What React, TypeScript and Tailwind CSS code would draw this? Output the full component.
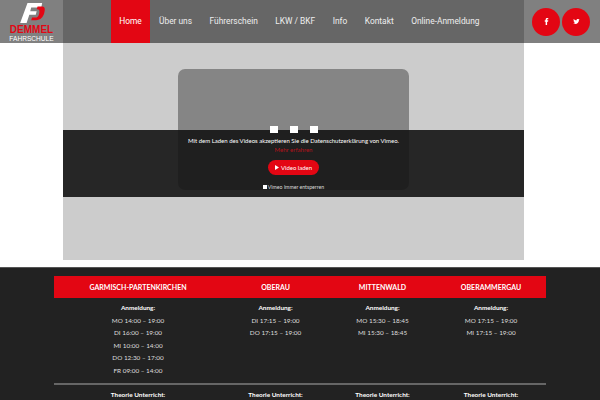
import React from 'react';

const nav = ['Über uns', 'Führerschein', 'LKW / BKF', 'Info', 'Kontakt', 'Online-Anmeldung'];

const locations = [
  { name: 'GARMISCH-PARTENKIRCHEN', times: ['MO 14:00 – 19:00', 'DI 16:00 – 19:00', 'MI 10:00 – 14:00', 'DO 12:30 – 17:00', 'FR 09:00 – 14:00'] },
  { name: 'OBERAU', times: ['DI 17:15 – 19:00', 'DO 17:15 – 19:00'] },
  { name: 'MITTENWALD', times: ['MO 15:30 – 18:45', 'MI 15:30 – 18:45'] },
  { name: 'OBERAMMERGAU', times: ['MO 17:15 – 19:00', 'MI 17:15 – 19:00'] },
];

function Logo() {
  return (
    <div className="flex h-[43px] w-[63px] shrink-0 flex-col items-center bg-[#808080]">
      <svg width="26" height="22" viewBox="0 0 28 24" className="mt-[2px] ml-[2px]">
        <path d="M8 1 H24 L23 6 H12 L11 10 H18 L17 14 H10 L7 23 H0 Z" fill="#fff" />
        <path d="M19 5 H24 C28 5 27 10 26 13 C24 18 21 20 15 20 H12 L13 17 H17 C20 17 21 13 21 10 C21 8 19 8 18 8 Z" fill="#e30613" />
      </svg>
      <div className="mt-[1px] font-['Liberation_Sans',sans-serif] text-[10px] leading-[10px] font-bold text-[#e30613]">DEMMEL</div>
      <div className="font-['Liberation_Sans',sans-serif] text-[6.6px] leading-[7px] text-white">FAHRSCHULE</div>
    </div>
  );
}

function Header() {
  return (
    <header className="absolute inset-x-0 top-0 flex h-[43px] font-['Roboto',sans-serif] text-[8.4px] text-[#eeeeee]">
      <Logo />
      <nav className="flex flex-1 items-stretch bg-[#666666] pl-[48px]">
        <a className="flex w-[39px] items-center justify-center bg-[#e30613] text-white">Home</a>
        <ul className="ml-[9px] flex items-center gap-[17.5px]">
          {nav.map((item) => (
            <li key={item} className="whitespace-nowrap">{item}</li>
          ))}
        </ul>
      </nav>
      <div className="flex w-[76px] shrink-0 items-center gap-[2px] bg-[#808080] pl-[8px]">
        <span className="flex h-[28px] w-[28px] items-center justify-center rounded-full bg-[#e30613]">
          <svg width="7" height="7" viewBox="0 0 24 24" fill="#fff"><path d="M14 8V6c0-1 .5-1.500 1.500-1.500H18V0h-4c-3.500 0-5 2.500-5 5v3H6v4.500h3V24h5V12.500h3.500L18 8z" /></svg>
        </span>
        <span className="flex h-[28px] w-[28px] items-center justify-center rounded-full bg-[#e30613]">
          <svg width="7" height="7" viewBox="0 0 24 24" fill="#fff"><path d="M23 5c-.8.400-1.700.600-2.600.700 1-.600 1.700-1.400 2-2.500-.9.500-1.900.900-2.900 1.100C18.700 3.500 17.500 3 16.200 3c-2.500 0-4.500 2-4.500 4.500 0 .4 0 .7.100 1C8 8.300 4.700 6.500 2.500 3.800c-.4.700-.6 1.400-.6 2.300 0 1.600.8 2.900 2 3.700-.7 0-1.400-.2-2-.6v.1c0 2.200 1.600 4 3.600 4.400-.7.200-1.400.2-2 .1.600 1.800 2.200 3.100 4.200 3.100C6.100 18.100 3.400 19 .5 18.700c2 1.300 4.400 2 7 2 8.300 0 12.900-6.900 12.900-12.900v-.6c.9-.6 1.600-1.400 2.600-2.200z" /></svg>
        </span>
      </div>
    </header>
  );
}

function VideoConsent() {
  return (
    <div className="relative ml-[63px] mr-[76px] h-[260px] bg-[#cccccc]">
      <div className="absolute left-[115px] top-[69px] h-[121px] w-[231px] rounded-[7px] bg-black/35" />
      <div className="absolute inset-x-0 top-[130px] flex h-[67px] flex-col items-center bg-[#141414]/90 text-white">
        <div className="absolute -top-[4px] flex gap-[12px]">
          <span className="h-[7px] w-[8px] bg-white" />
          <span className="h-[7px] w-[8px] bg-white" />
          <span className="h-[7px] w-[8px] bg-white" />
        </div>
        <p className="mt-[6px] text-[6px] leading-[10px]">Mit dem Laden des Videos akzeptieren Sie die Datenschutzerklärung von Vimeo.</p>
        <a className="text-[6px] leading-[8px] text-[#b5121b]">Mehr erfahren</a>
        <button className="mt-[6px] flex h-[15px] w-[51px] items-center justify-center gap-[2px] rounded-full bg-[#e30613] text-[6px]">
          <svg width="4" height="5" viewBox="0 0 5 6" fill="#fff"><path d="M0 0 L5 3 L0 6 Z" /></svg>
          Video laden
        </button>
        <label className="mt-[8px] flex items-center gap-[1px] text-[5.2px] leading-[8px] text-[#dddddd]">
          <span className="h-[4px] w-[4px] bg-white" />
          Vimeo immer entsperren
        </label>
      </div>
    </div>
  );
}

function Hours() {
  return (
    <footer className="mt-[7px] h-[133px] overflow-hidden border-t border-[#555555] bg-[#222222] pt-[8px] text-center text-[6.4px] text-[#dddddd]">
      <div className="mx-[54px]">
        <div className="grid h-[22px] grid-cols-[168px_107px_107px_110px] items-center bg-[#e30613] text-[7px] font-bold text-white">
          {locations.map((l) => (
            <div key={l.name}>{l.name}</div>
          ))}
        </div>
        <div className="grid h-[85px] grid-cols-[168px_107px_107px_110px] pt-[4px] leading-[12.5px]">
          {locations.map((l) => (
            <div key={l.name}>
              <div className="font-bold text-white">Anmeldung:</div>
              {l.times.map((t) => (
                <div key={t}>{t}</div>
              ))}
            </div>
          ))}
        </div>
        <div className="h-[2px] bg-[#666666]" />
        <div className="grid grid-cols-[168px_107px_107px_110px] pt-[4px] leading-[12.5px]">
          {locations.map((l) => (
            <div key={l.name} className="font-bold text-white">Theorie Unterricht:</div>
          ))}
        </div>
      </div>
    </footer>
  );
}

export default function App() {
  return (
    <div className="relative h-[400px] w-[600px] overflow-hidden bg-white font-['Lato',sans-serif]">
      <VideoConsent />
      <Header />
      <Hours />
    </div>
  );
}
